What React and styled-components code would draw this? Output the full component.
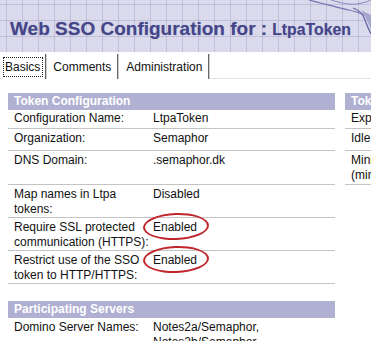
import React from 'react';
import styled, { createGlobalStyle } from 'styled-components';

const GlobalStyle = createGlobalStyle`
  html, body {
    margin: 0;
    padding: 0;
    overflow: hidden;
    background: #fff;
  }
  body {
    font-family: 'Liberation Sans', Arial, sans-serif;
    color: #111;
  }
`;

const Page = styled.div`
  width: 371px;
  height: 341px;
  overflow: hidden;
`;

const Header = styled.div`
  position: relative;
  height: 52px;
  background-color: #dadaec;
  background-image:
    linear-gradient(to right, rgba(160, 160, 200, 0.45) 1px, transparent 1px),
    linear-gradient(to bottom, rgba(160, 160, 200, 0.45) 1px, transparent 1px);
  background-size: 16px 16px;
  background-position: 6px 4px;
  display: flex;
  align-items: flex-end;
  padding: 0 0 12px 10px;
  box-sizing: border-box;
  overflow: hidden;
`;

const Title = styled.h1`
  margin: 0;
  font-size: 19px;
  font-weight: 700;
  color: #45458a;
  white-space: nowrap;
  position: relative;
  text-shadow: 0 0 1px rgba(64, 64, 127, 0.35);
`;

const TitleName = styled.span`
  font-size: 15.8px;
  margin-left: 5px;
`;

const Sketch = styled.svg`
  position: absolute;
  top: 0;
  right: 0;
`;

const TabBar = styled.div`
  display: flex;
  align-items: stretch;
  height: 25px;
  padding-left: 3px;
  margin-top: 2px;
  border-bottom: 1px solid #e2e2e2;
  box-sizing: border-box;
  font-size: 12px;
`;

const Tab = styled.div`
  display: flex;
  align-items: center;
  padding: 0 ${(p) => p.$r}px 0 ${(p) => p.$l}px;
  border-right: 1px solid #666;
  box-shadow: 1px 0 0 #ccc;
  margin-right: 1px;
  margin-bottom: -1px;
  background: #fff;
`;

const Focused = styled.span`
  outline: 1px dotted #222;
  outline-offset: 0;
  padding: 2px 2px 2px 1px;
`;

const Content = styled.div`
  display: flex;
  gap: 10px;
  padding-left: 8px;
  margin-top: 14px;
  font-size: 12px;
  line-height: 15px;
`;

const Panel = styled.div`
  flex: 0 0 ${(p) => p.$w}px;
  display: flex;
  flex-direction: column;
`;

const Bar = styled.div`
  height: 17px;
  line-height: 17px;
  background: #b0b0d2;
  color: #fff;
  font-weight: 700;
  font-size: 12px;
  padding-left: 6px;
  margin-top: ${(p) => p.$top || 0}px;
`;

const Row = styled.div`
  display: grid;
  grid-template-columns: ${(p) => p.$label || 145}px 1fr;
  height: ${(p) => p.$h}px;
  box-sizing: border-box;
  padding-top: ${(p) => (p.$pad != null ? p.$pad : 2)}px;
  border-bottom: ${(p) => (p.$open ? 'none' : '1px solid #c4c4c4')};
`;

const Label = styled.div`
  padding-left: 6px;
`;

const Value = styled.div`
  white-space: nowrap;
`;

const Circled = styled.span`
  position: relative;
  &::after {
    content: '';
    position: absolute;
    left: -10px;
    top: -7px;
    width: 62px;
    height: 23px;
    border: 2px solid #c0262c;
    border-radius: 50%;
    transform: rotate(-2deg);
  }
`;

const left = [
  { label: 'Configuration Name:', value: 'LtpaToken', h: 19, pad: 1 },
  { label: 'Organization:', value: 'Semaphor', h: 22 },
  { label: 'DNS Domain:', value: '.semaphor.dk', h: 34 },
  { label: 'Map names in Ltpa tokens:', value: 'Disabled', h: 33 },
  { label: 'Require SSL protected communication (HTTPS):', value: 'Enabled', h: 33, circled: true },
  { label: 'Restrict use of the SSO token to HTTP/HTTPS:', value: 'Enabled', h: 33, circled: true },
];

const right = [
  { label: 'Expiration (minutes):', value: '30', h: 19, pad: 1 },
  { label: 'Idle Timeout (minutes):', value: '0', h: 22 },
  { label: 'Minimum Idle Timeout (minutes):', value: '0', h: 34 },
];

const App = () => (
  <Page>
    <GlobalStyle />
    <Header>
      <Sketch width="80" height="48" viewBox="0 0 80 48">
        <path d="M18 0 C32 4 46 7 58 10 C67 12 74 15 80 17" fill="none" stroke="#7474b0" strokeWidth="1.2" />
        <path d="M40 0 C50 3 58 5 66 4 C72 3 76 2 80 0" fill="none" stroke="#8a8abe" strokeWidth="1" />
        <path d="M62 8 C68 10 72 14 74 20 C76 26 78 30 80 34" fill="none" stroke="#6666a4" strokeWidth="1.3" />
        <path d="M70 10 C74 12 78 14 80 15 L80 30 C78 24 75 17 70 10 Z" fill="#a4a4cc" />
      </Sketch>
      <Title>
        Web SSO Configuration for :<TitleName>LtpaToken</TitleName>
      </Title>
    </Header>
    <TabBar>
      <Tab $l={1} $r={3}>
        <Focused>Basics</Focused>
      </Tab>
      <Tab $l={6} $r={6}>Comments</Tab>
      <Tab $l={7} $r={6}>Administration</Tab>
    </TabBar>
    <Content>
      <Panel $w={327}>
        <Bar>Token Configuration</Bar>
        {left.map((r) => (
          <Row key={r.label} $h={r.h} $pad={r.pad}>
            <Label>{r.label}</Label>
            <Value>{r.circled ? <Circled>{r.value}</Circled> : r.value}</Value>
          </Row>
        ))}
        <Bar $top={17}>Participating Servers</Bar>
        <Row $h={40} $open>
          <Label>Domino Server Names:</Label>
          <Value>
            Notes2a/Semaphor,
            <br />
            Notes2b/Semaphor
          </Value>
        </Row>
      </Panel>
      <Panel $w={300}>
        <Bar>Token Expiration</Bar>
        {right.map((r) => (
          <Row key={r.label} $h={r.h} $pad={r.pad} $label={150}>
            <Label>{r.label}</Label>
            <Value>{r.value}</Value>
          </Row>
        ))}
      </Panel>
    </Content>
  </Page>
);

export default App;
